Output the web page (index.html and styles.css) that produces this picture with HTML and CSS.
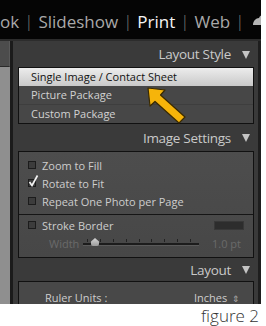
FILE: index.html
```html
<!DOCTYPE html>
<html>
<head>
<meta charset="utf-8">
<link rel="stylesheet" href="styles.css">
</head>
<body>
<div class="page">
  <div class="shot">
    <div class="topbar">
      <span class="mod first">ok</span><span class="sep">|</span><span class="mod">Slideshow</span><span class="sep">|</span><span class="mod active">Print</span><span class="sep">|</span><span class="mod">Web</span><span class="sep">|</span>
      <svg class="cloud" width="14" height="14" viewBox="0 0 14 14"><path d="M0 13 C0 9 3 6 6 6 C7 3 10 2 14 3 L14 13 Z" fill="#b5b5b5"/></svg>
    </div>
    <div class="main">
      <div class="leftstrip"><div class="lbox"></div></div>
      <div class="panel">
        <div class="hdr hdr-first">Layout Style<span class="tri"></span></div>
        <div class="box list">
          <div class="item selected">Single Image / Contact Sheet</div>
          <div class="item">Picture Package</div>
          <div class="item">Custom Package</div>
        </div>
        <div class="hdr">Image Settings<span class="tri"></span></div>
        <div class="box settings">
          <div class="sec">
            <div class="row"><span class="cb"></span>Zoom to Fill</div>
            <div class="row"><span class="cb checked"><svg width="11" height="12" viewBox="0 0 11 12"><path d="M1.5 7 L4 10.5 L9.5 0.5" fill="none" stroke="#f2f2f2" stroke-width="1.7"/></svg></span>Rotate to Fit</div>
            <div class="row"><span class="cb"></span>Repeat One Photo per Page</div>
          </div>
          <div class="sec sec2">
            <div class="row"><span class="cb"></span>Stroke Border<span class="swatch"></span></div>
            <div class="row slider-row">
              <span class="dim lbl">Width</span>
              <span class="slider">
                <span class="ticks"><i></i><i></i><i></i><i></i><i></i><i></i><i></i><i></i><i></i></span>
                <span class="track"></span>
                <span class="thumb"></span>
              </span>
              <span class="dim val">1.0 pt</span>
            </div>
          </div>
        </div>
        <div class="hdr hdr-last">Layout<span class="tri"></span></div>
        <div class="box layout">
          <div class="row ruler"><span>Ruler Units :</span><span class="units">Inches <span class="updown">&#8661;</span></span></div>
        </div>
      </div>
      <div class="rightedge"></div>
    </div>
    <svg class="arrow" width="44" height="42" viewBox="0 0 44 42">
      <path d="M3 3 L20 5 L15.5 10 L40 32 L34 38 L10 16.5 L5 21 Z" fill="#f6b40a" stroke="#3a2a00" stroke-width="1.2" stroke-linejoin="round"/>
    </svg>
  </div>
  <div class="caption">figure 2</div>
</div>
</body>
</html>
```

FILE: styles.css
```css
html, body {
  margin: 0;
  padding: 0;
  background: #ffffff;
}
body {
  width: 266px;
  height: 326px;
  overflow: hidden;
  font-family: "Open Sans", "Liberation Sans", sans-serif;
}
.page {
  width: 266px;
}
.shot {
  position: relative;
  width: 261px;
  height: 304px;
  overflow: hidden;
  background: #3a3a3a;
  display: flex;
  flex-direction: column;
}
.topbar {
  flex: none;
  background: #050505;
  border-bottom: 2px solid #2c2c2c;
  display: flex;
  align-items: center;
  white-space: nowrap;
  font-size: 17px;
  color: #a9a9a9;
  overflow: hidden;
  padding-top: 4px;
  box-sizing: border-box;
  height: 41px;
}
.mod.first {
  margin-left: 0;
}
.mod.active {
  color: #f4f4f4;
  font-weight: 500;
}
.sep {
  color: #7a7a7a;
  margin: 0 5px;
  font-weight: 300;
  position: relative;
  top: -1px;
}
.cloud {
  margin-left: 4px;
  margin-top: -6px;
  flex: none;
}
.main {
  flex: 1;
  display: flex;
  min-height: 0;
}
.leftstrip {
  width: 10px;
  flex: none;
  background: #8f8f8f;
  border-right: 3px solid #1b1b1b;
}
.lbox {
  height: 25px;
  background: #4c4c4c;
  border-bottom: 1px solid #2a2a2a;
  border-right: 1px solid #5a5a5a;
}
.panel {
  flex: 1;
  background: #3a3a3a;
  padding: 0 4px 0 5px;
  display: flex;
  flex-direction: column;
  min-width: 0;
}
.rightedge {
  width: 3px;
  flex: none;
  background: #1e1e1e;
}
.hdr {
  height: 27px;
  flex: none;
  display: flex;
  align-items: center;
  justify-content: flex-end;
  font-size: 13.5px;
  color: #c9c9c9;
  padding-right: 4px;
  letter-spacing: -0.3px;
}
.hdr-first {
  height: 26px;
}
.hdr-last {
  height: 23px;
}
.tri {
  width: 0;
  height: 0;
  border-left: 4px solid transparent;
  border-right: 4px solid transparent;
  border-top: 8px solid #c4c4c4;
  margin-left: 11px;
  margin-top: 1px;
}
.box {
  flex: none;
  border: 1px solid #111;
  background: #474747;
  font-size: 11px;
  color: #d2d2d2;
}
.list {
  background: #474747;
}
.item {
  height: 18px;
  line-height: 18px;
  padding-left: 12px;
  border-bottom: 1px solid #3e3e3e;
}
.item:last-child {
  border-bottom: none;
}
.item.selected {
  background: linear-gradient(#ececec, #c9c9c9);
  color: #111;
  border-bottom: none;
}
.settings {
  background: linear-gradient(#4d4d4d, #474747);
}
.sec {
  padding: 4px 0 4px;
  border-bottom: 1px solid #151515;
}
.sec2 {
  border-bottom: none;
  padding: 1px 0 5px;
}
.row {
  height: 18px;
  display: flex;
  align-items: center;
  padding-left: 9px;
  color: #cdcdcd;
}
.cb {
  width: 6px;
  height: 6px;
  border: 1px solid #1c1c1c;
  background: #3c3c3c;
  margin-right: 6px;
  position: relative;
  flex: none;
}
.cb svg {
  position: absolute;
  left: -1px;
  top: -5px;
}
.swatch {
  width: 28px;
  height: 7px;
  background: #2d2d2d;
  border: 1px solid #383838;
  margin-left: auto;
  margin-right: 9px;
}
.slider-row {
  padding-left: 30px;
}
.dim {
  color: #6a6a6a;
}
.lbl {
  width: 34px;
  flex: none;
}
.slider {
  position: relative;
  width: 116px;
  height: 14px;
  flex: none;
}
.track {
  position: absolute;
  left: 0;
  right: 0;
  top: 7px;
  height: 2px;
  background: #1c1c1c;
  border-bottom: 1px solid #5a5a5a;
}
.ticks {
  position: absolute;
  left: 4px;
  right: 8px;
  top: 3px;
  display: flex;
  justify-content: space-between;
}
.ticks i {
  display: block;
  width: 1px;
  height: 3px;
  background: #222;
}
.thumb {
  position: absolute;
  left: 8px;
  top: 2px;
  width: 8px;
  height: 8px;
  background: linear-gradient(#d6d6d6, #9a9a9a);
  clip-path: polygon(50% 0, 100% 45%, 100% 100%, 0 100%, 0 45%);
  border-radius: 2px;
}
.val {
  margin-left: auto;
  margin-right: 12px;
}
.layout {
  background: #484848;
  height: 40px;
}
.ruler {
  padding-left: 26px;
  padding-right: 13px;
  justify-content: space-between;
  margin-top: 6px;
  height: 18px;
}
.updown {
  font-size: 9px;
  color: #aaa;
  margin-left: 2px;
}
.arrow {
  position: absolute;
  left: 145px;
  top: 85px;
}
.caption {
  text-align: right;
  padding-right: 7px;
  font-size: 17px;
  line-height: 18px;
  font-weight: 300;
  color: #333333;
  margin-top: 3px;
}
```
